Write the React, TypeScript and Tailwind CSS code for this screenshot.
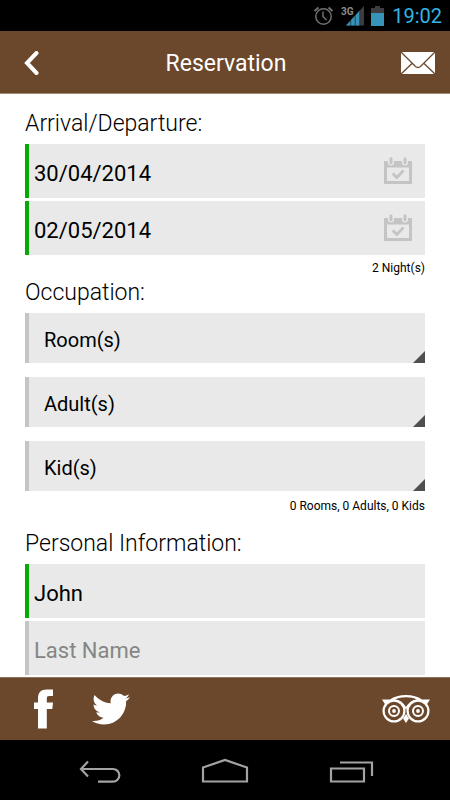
import React, { useState } from 'react';
import { FaTwitter } from 'react-icons/fa';

function StatusBar() {
    return (
        <div className="h-[31px] shrink-0 bg-black flex items-center justify-end pr-2">
            <svg className="w-5 h-5 mr-[7px]" viewBox="0 0 20 20" fill="none" stroke="#6f6f6f" strokeWidth="1.5">
                <circle cx="10.5" cy="10.5" r="7.7" />
                <path d="M10 5.5v5l3.500 3.500" />
                <path d="M1.500 5L5.500 1.500M15.500 1.500L19.500 5" strokeWidth="2" />
            </svg>
            <svg className="w-6 h-5 mr-[7px]" viewBox="0 0 24 20">
                <path d="M6 19.500L24 0v19.500z" fill="#3d3d3d" />
                <path d="M6 19.500L20 4.300v15.200z" fill="#3793b8" />
                <path d="M10.700 14v6M15.200 9v11M19.700 5v15" stroke="#0c2a36" strokeWidth="0.7" />
                <text x="1" y="9" fill="#8c8c8c" fontSize="10" fontWeight="700" fontFamily="Roboto, sans-serif">3G</text>
            </svg>
            <svg className="w-[13px] h-5 mr-2" viewBox="0 0 13 20">
                <path d="M4 0h5v2h4v18H0V2h4z" fill="#3d3d3d" />
                <path d="M0 7h13v13H0z" fill="#3793b8" />
            </svg>
            <span className="text-[20px] leading-6 text-[#33b5e5]">19:02</span>
        </div>
    );
}

function CalendarIcon() {
    return (
        <svg className="w-7 h-7" viewBox="0 0 28 28" fill="none">
            <path d="M0 4h28v23H0zM3 10.500V24h22V10.500z" fill="#c4c4c4" fillRule="evenodd" />
            <path d="M7 2.500v3M21 2.500v3" stroke="#e9e9e9" strokeWidth="6" strokeLinecap="round" />
            <path d="M7 1.800v4M21 1.800v4" stroke="#c4c4c4" strokeWidth="3" strokeLinecap="round" />
            <path d="M8.800 16.500l4 4 6.700-7" stroke="#c4c4c4" strokeWidth="2.800" />
        </svg>
    );
}

interface DateFieldProps {
    label: string;
    value: string;
}

function DateField({ label, value }: DateFieldProps) {
    const [date, setDate] = useState(value);

    return (
        <div className="h-[54px] flex items-center bg-[#e9e9e9] border-l-4 border-[#06a906] pl-[5px] pr-[13px]">
            <input
                aria-label={label}
                value={date}
                onChange={(e) => setDate(e.target.value)}
                className="flex-1 min-w-0 h-full pt-1 bg-transparent text-[22px] text-black outline-none"
            />
            <button type="button" aria-label={`Pick ${label}`}>
                <CalendarIcon />
            </button>
        </div>
    );
}

interface SelectFieldProps {
    label: string;
    max: number;
}

function SelectField({ label, max }: SelectFieldProps) {
    return (
        <div className="relative h-[50px] bg-[#e9e9e9] border-l-4 border-[#c5c5c5]">
            <select
                aria-label={label}
                defaultValue=""
                className="appearance-none w-full h-full pl-[15px] pt-1 bg-transparent text-[20px] text-black outline-none"
            >
                <option value="">{label}</option>
                {Array.from({ length: max }, (_, i) => (
                    <option key={i} value={i + 1}>{i + 1}</option>
                ))}
            </select>
            <svg className="absolute right-0 bottom-0 w-3 h-3 pointer-events-none" viewBox="0 0 12 12">
                <path d="M12 0v12H0z" fill="#4f4f4f" />
            </svg>
        </div>
    );
}

interface TextFieldProps {
    label: string;
    initial?: string;
}

function TextField({ label, initial = '' }: TextFieldProps) {
    const [value, setValue] = useState(initial);

    return (
        <input
            aria-label={label}
            placeholder={label}
            value={value}
            onChange={(e) => setValue(e.target.value)}
            className={`block w-full h-[54px] pl-[5px] pt-1 bg-[#e9e9e9] border-l-4 text-[22px] text-black placeholder:text-[#858585] outline-none ${value ? 'border-[#06a906]' : 'border-[#c5c5c5]'}`}
        />
    );
}

function FacebookIcon() {
    return (
        <svg className="w-5 h-10" viewBox="0 0 20 40" fill="#fff">
            <path d="M4 39.500V20H0v-6.500h4V9.500C4 3.500 7 .5 12.500.5H19V7h-3.800C13.200 7 12.800 7.800 12.800 9.500v4H19L18.300 20h-5.500v19.500z" />
        </svg>
    );
}

function TripAdvisorIcon() {
    return (
        <svg className="w-12 h-7" viewBox="0 0 48 28" fill="none" stroke="#fff">
            <path d="M0 4.500h8C12 1.600 17.500 0 24 0s12 1.600 16 4.500h8L44.500 10l-8.500-3c-5 0-9.500 3.500-12 7.500C21.500 10.500 17 7 12 7L3.500 10z" fill="#fff" stroke="none" />
            <path d="M13 4.500C16 3 20 2.200 24 2.200s8 .8 11 2.300C30 5 26.500 7.800 24 12 21.500 7.800 18 5 13 4.500z" fill="#6b472b" stroke="none" />
            <circle cx="12" cy="16" r="10.400" fill="#6b472b" strokeWidth="2.200" />
            <circle cx="36" cy="16" r="10.400" fill="#6b472b" strokeWidth="2.200" />
            <circle cx="12" cy="16" r="5" strokeWidth="2" />
            <circle cx="36" cy="16" r="5" strokeWidth="2" />
            <circle cx="12" cy="16" r="1.900" fill="#fff" stroke="none" />
            <circle cx="36" cy="16" r="1.900" fill="#fff" stroke="none" />
            <path d="M21 23.500L24 28l3-4.500L24 19z" fill="#fff" stroke="none" />
        </svg>
    );
}

export default function App() {
    return (
        <div className="h-dvh flex flex-col bg-white font-['Roboto',sans-serif] text-black">
            <StatusBar />

            <header className="h-[63px] shrink-0 flex items-center justify-between bg-[#6b472b] border-b border-[#a08a78] pt-[2px] pl-6 pr-[14px]">
                <button type="button" aria-label="Back" className="w-7">
                    <svg className="w-[15px] h-6" viewBox="0 0 15 24" fill="none" stroke="#fff" strokeWidth="4">
                        <path d="M12.500 2L3 12l9.500 10" strokeLinecap="round" />
                    </svg>
                </button>
                <h1 className="pt-[2px] text-[23px] leading-8 text-white">Reservation</h1>
                <button type="button" aria-label="Send message">
                    <svg className="w-9 h-6" viewBox="0 0 36 24" fill="none">
                        <path d="M1 1h34v22H1z" fill="#fff" />
                        <path d="M1 1l14.500 14.500q2.500 2 5 0L35 1M1 23l11.500-11M35 23L23.500 12" stroke="#6b472b" strokeWidth="1.300" />
                    </svg>
                </button>
            </header>

            <main className="flex-1 min-h-0 overflow-hidden px-[25px] pt-[14px]">
                <h2 className="text-[23px] leading-8 font-light">Arrival/Departure:</h2>
                <div className="mt-1 flex flex-col gap-[3px]">
                    <DateField label="Arrival" value="30/04/2014" />
                    <DateField label="Departure" value="02/05/2014" />
                </div>
                <p className="mt-[5px] text-right text-[12px] leading-4">2 Night(s)</p>

                <h2 className="mt-px text-[23px] leading-8 font-light">Occupation:</h2>
                <div className="mt-1 flex flex-col gap-[14px]">
                    <SelectField label="Room(s)" max={5} />
                    <SelectField label="Adult(s)" max={8} />
                    <SelectField label="Kid(s)" max={6} />
                </div>
                <p className="mt-[7px] text-right text-[12px] leading-4">0 Rooms, 0 Adults, 0 Kids</p>

                <h2 className="mt-[14px] text-[23px] leading-8 font-light">Personal Information:</h2>
                <div className="mt-1 flex flex-col gap-[3px]">
                    <TextField label="First Name" initial="John" />
                    <TextField label="Last Name" />
                </div>
            </main>

            <footer className="h-[63px] shrink-0 flex items-center bg-[#6b472b] border-t border-[#8f7560] pl-[34px] pr-5">
                <a href="#facebook" aria-label="Facebook">
                    <FacebookIcon />
                </a>
                <a href="#twitter" aria-label="Twitter" className="ml-[38px] text-white">
                    <FaTwitter className="w-[38px] h-10" />
                </a>
                <a href="#tripadvisor" aria-label="TripAdvisor" className="ml-auto">
                    <TripAdvisorIcon />
                </a>
            </footer>

            <nav className="h-[60px] shrink-0 flex items-center justify-center gap-[78px] bg-black">
                <button type="button" aria-label="Back">
                    <svg className="w-12 h-8" viewBox="0 0 48 32" fill="none" stroke="#a3a3a3" strokeWidth="2.200">
                        <path d="M13 7.500L6 15l7 7.500M6 15h32a6.300 6.300 0 010 12.700H23" />
                    </svg>
                </button>
                <button type="button" aria-label="Home">
                    <svg className="w-12 h-8" viewBox="0 0 48 32" fill="none" stroke="#a3a3a3" strokeWidth="2.200">
                        <path d="M2 27.500V13.500L24 6l22 7.500v14z" />
                    </svg>
                </button>
                <button type="button" aria-label="Recent apps">
                    <svg className="w-12 h-8" viewBox="0 0 48 32" fill="none" stroke="#a3a3a3" strokeWidth="2.200">
                        <path d="M4 14.500h33v13H4zM13 8.500h32V22" />
                    </svg>
                </button>
            </nav>
        </div>
    );
}
